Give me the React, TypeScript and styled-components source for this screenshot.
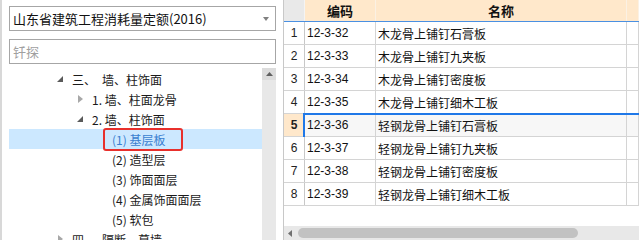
import React from "react";
import styled, { createGlobalStyle } from "styled-components";

const Global = createGlobalStyle`
  html, body { margin: 0; padding: 0; background: #fff; }
  body { width: 639px; height: 240px; overflow: hidden; font-family: "Noto Sans CJK SC", "Noto Sans", sans-serif; }
  * { box-sizing: border-box; }
`;

const Page = styled.div`
  display: flex;
  width: 639px;
  height: 240px;
  overflow: hidden;
`;

const LeftPanel = styled.div`
  width: 283px;
  flex: none;
  display: flex;
  flex-direction: column;
  padding: 6px 7px 0 9px;
  border-left: 2px solid #d8d8d8;
`;

const Select = styled.div`
  height: 25px;
  border: 1px solid #a6a6a6;
  margin-left: -2px;
  display: flex;
  align-items: center;
  justify-content: space-between;
  padding: 0 6px 0 3px;
  font-size: 13px;
  color: #111;
`;

const Caret = styled.span`
  width: 0;
  height: 0;
  border-left: 3.5px solid transparent;
  border-right: 3.5px solid transparent;
  border-top: 4px solid #808080;
`;

const Search = styled.div`
  height: 25px;
  margin: 8px 0 0 -2px;
  border: 1px solid #a6a6a6;
  display: flex;
  align-items: center;
  padding: 0 3px;
  font-size: 13px;
  color: #a0a0a0;
`;

const TreeArea = styled.div`
  flex: 1;
  display: flex;
  margin-top: 4px;
  margin-left: -2px;
  min-height: 0;
`;

const TreeList = styled.div`
  flex: 1;
  padding-top: 1px;
`;

const TreeRow = styled.div<{ $level: number; $selected?: boolean }>`
  height: 20px;
  display: flex;
  align-items: center;
  padding-left: ${(p) => 48 + p.$level * 20}px;
  background: ${(p) => (p.$selected ? "#cce8ff" : "transparent")};
  font-size: 12px;
  color: ${(p) => (p.$selected ? "#3a7fd0" : "#1a1a1a")};
  white-space: pre;
`;

const Toggle = styled.span`
  width: 15px;
  height: 20px;
  flex: none;
  display: flex;
  align-items: center;
  justify-content: flex-start;
`;

const Label = styled.span<{ $marked?: boolean }>`
  position: relative;
  &::after {
    content: "";
    display: ${(p) => (p.$marked ? "block" : "none")};
    position: absolute;
    left: -9px;
    right: -18px;
    top: -3px;
    bottom: -3px;
    border: 2px solid #e8302c;
    border-radius: 3px;
  }
`;

const VScroll = styled.div`
  width: 14px;
  flex: none;
  background: #e8e8e8;
`;

const VScrollBtn = styled.div`
  height: 12px;
  display: flex;
  align-items: center;
  justify-content: center;
  background: #dcdcdc;
`;

const TablePanel = styled.div`
  flex: 1;
  display: flex;
  flex-direction: column;
  border-left: 1px solid #c8c8c8;
  min-width: 0;
`;

const Grid = styled.div`
  flex: 1;
`;

const Row = styled.div<{ $active?: boolean }>`
  position: relative;
  display: grid;
  grid-template-columns: 21px 71px 251px 1fr;
  height: 23px;
  border-bottom: 1px solid #d4d4d4;
  background: ${(p) => (p.$active ? "#f7f7f7" : "#fff")};
  &::after {
    content: "";
    display: ${(p) => (p.$active ? "block" : "none")};
    position: absolute;
    left: 19px;
    right: -10px;
    top: -1px;
    height: 24px;
    border: 2px solid #1f78e8;
    pointer-events: none;
  }
`;

const HeadRow = styled.div`
  display: grid;
  grid-template-columns: 21px 71px 251px 1fr;
  height: 22px;
  border-bottom: 1px solid #4a90e2;
  background: #ffe8cb;
`;

const HeadCell = styled.div<{ $corner?: boolean }>`
  display: flex;
  align-items: center;
  justify-content: center;
  font-size: 13px;
  font-weight: 700;
  color: #111;
  border-right: 1px solid ${(p) => (p.$corner ? "#f4f4f4" : "#fbf1e4")};
  background: ${(p) => (p.$corner ? "#e9e9e9" : "transparent")};
`;

const NumCell = styled.div<{ $active?: boolean }>`
  display: flex;
  align-items: center;
  justify-content: center;
  font-family: "Liberation Sans", sans-serif;
  font-size: 12px;
  font-weight: ${(p) => (p.$active ? 700 : 400)};
  color: #222;
  background: ${(p) => (p.$active ? "#ffe8cb" : "#fff")};
  border-right: 1px solid #c8c8c8;
`;

const Cell = styled.div<{ $mono?: boolean }>`
  display: flex;
  align-items: center;
  padding-left: 2px;
  font-family: ${(p) => (p.$mono ? `"Liberation Sans", sans-serif` : `"Noto Sans CJK SC", sans-serif`)};
  font-size: 12px;
  color: #111;
  border-right: 1px solid #d4d4d4;
  white-space: nowrap;
  overflow: hidden;
`;

const HScroll = styled.div`
  height: 14px;
  background: #e8e8e8;
  display: flex;
  align-items: center;
  padding-left: 4px;
`;

const Thumb = styled.div`
  width: 280px;
  height: 10px;
  margin-left: 6px;
  border-radius: 5px;
  background: #c2c2c2;
`;

const Expanded = () => (
  <svg width="6" height="6" viewBox="0 0 6 6">
    <polygon points="6,0 6,6 0,6" fill="#5a5a5a" />
  </svg>
);

const Collapsed = () => (
  <svg width="5" height="8" viewBox="0 0 5 8" style={{ marginLeft: 1 }}>
    <polygon points="0,0 5,4 0,8" fill="#a8a8a8" />
  </svg>
);

type Node = { level: number; label: string; state?: "open" | "closed"; selected?: boolean };

const tree: Node[] = [
  { level: 0, label: "三、\u2002墙、柱饰面", state: "open" },
  { level: 1, label: "1. 墙、柱面龙骨", state: "closed" },
  { level: 1, label: "2. 墙、柱饰面", state: "open" },
  { level: 2, label: "(1) 基层板", selected: true },
  { level: 2, label: "(2) 造型层" },
  { level: 2, label: "(3) 饰面面层" },
  { level: 2, label: "(4) 金属饰面面层" },
  { level: 2, label: "(5) 软包" },
  { level: 0, label: "四、\u2002隔断、幕墙", state: "closed" },
];

const rows = [
  ["12-3-32", "木龙骨上铺钉石膏板"],
  ["12-3-33", "木龙骨上铺钉九夹板"],
  ["12-3-34", "木龙骨上铺钉密度板"],
  ["12-3-35", "木龙骨上铺钉细木工板"],
  ["12-3-36", "轻钢龙骨上铺钉石膏板"],
  ["12-3-37", "轻钢龙骨上铺钉九夹板"],
  ["12-3-38", "轻钢龙骨上铺钉密度板"],
  ["12-3-39", "轻钢龙骨上铺钉细木工板"],
];

export default function App() {
  return (
    <>
      <Global />
      <Page>
        <LeftPanel>
          <Select>
            <span>山东省建筑工程消耗量定额(2016)</span>
            <Caret />
          </Select>
          <Search>钎探</Search>
          <TreeArea>
            <TreeList>
              {tree.map((n, i) => (
                <TreeRow key={i} $level={n.level} $selected={n.selected}>
                  <Toggle>
                    {n.state === "open" ? <Expanded /> : n.state === "closed" ? <Collapsed /> : null}
                  </Toggle>
                  <Label $marked={n.selected}>{n.label}</Label>
                </TreeRow>
              ))}
            </TreeList>
            <VScroll>
              <VScrollBtn>
                <svg width="7" height="4" viewBox="0 0 7 4">
                  <polygon points="0,4 3.5,0 7,4" fill="#606060" />
                </svg>
              </VScrollBtn>
            </VScroll>
          </TreeArea>
        </LeftPanel>
        <TablePanel>
          <Grid>
            <HeadRow>
              <HeadCell $corner />
              <HeadCell>编码</HeadCell>
              <HeadCell>名称</HeadCell>
              <HeadCell />
            </HeadRow>
            {rows.map((r, i) => (
              <Row key={i} $active={i === 4}>
                <NumCell $active={i === 4}>{i + 1}</NumCell>
                <Cell $mono>{r[0]}</Cell>
                <Cell>{r[1]}</Cell>
                <Cell />
              </Row>
            ))}
          </Grid>
          <HScroll>
            <svg width="4" height="7" viewBox="0 0 4 7">
              <polygon points="4,0 0,3.5 4,7" fill="#707070" />
            </svg>
            <Thumb />
          </HScroll>
        </TablePanel>
      </Page>
    </>
  );
}
